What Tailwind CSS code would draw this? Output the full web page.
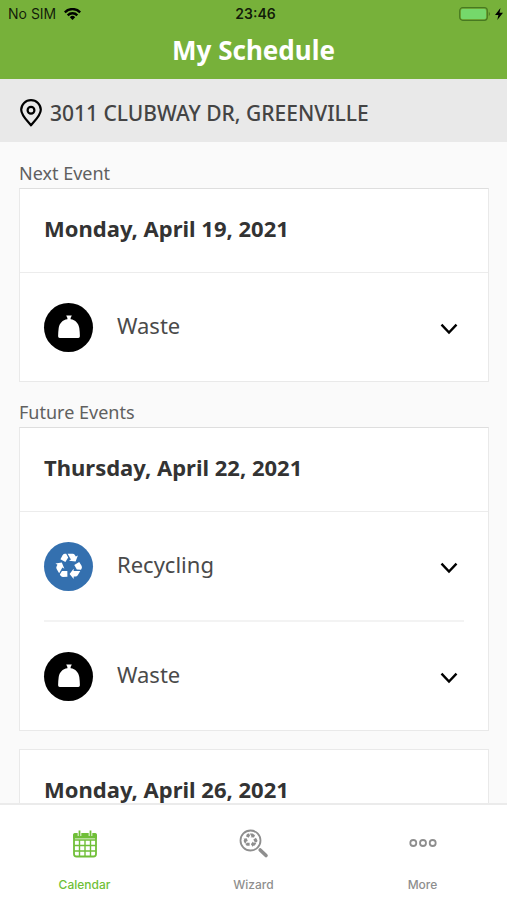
<!DOCTYPE html>
<html lang="en">
<head>
<meta charset="utf-8">
<meta name="viewport" content="width=device-width, initial-scale=1">
<title>My Schedule</title>
<script src="https://cdn.jsdelivr.net/npm/@tailwindcss/browser@4"></script>
</head>
<body class="flex h-screen flex-col overflow-hidden bg-[#fafafa] font-['Noto_Sans',sans-serif] text-[#333]">
<svg class="hidden" aria-hidden="true">
  <symbol id="recycle" viewBox="-14 -14 28 28">
    <g id="arm">
      <path d="M-8.600 -6.800L-6.400 -10.800Q-5.600 -12.200 -4 -12.200H-2.800L-.8 -8.600L-3.600 -4Z"/>
      <path d="M-1.400 -12.200H3.600Q5.200 -12.200 6 -10.800L6.800 -9.400L8.900 -10.500L6.600 -4.500L0 -5.300L1.900 -6.500Z"/>
    </g>
    <use href="#arm" transform="rotate(120)"/>
    <use href="#arm" transform="rotate(240)"/>
  </symbol>
  <symbol id="bag" viewBox="0 0 24 24">
    <path d="M9.200 .5H14.800L13.600 3V4.200C18.500 4.700 21.600 8.500 22.300 13Q22.900 17.500 22.900 21.300Q22.900 23 21.300 23H2.700Q1.100 23 1.100 21.300Q1.100 17.500 1.700 13C2.400 8.500 5.500 4.700 10.400 4.200V3Z"/>
  </symbol>
  <symbol id="chevron" viewBox="0 0 18 12">
    <path d="M1.500 1.700L9 9.500L16.500 1.700" fill="none" stroke="currentColor" stroke-width="2.400"/>
  </symbol>
</svg>

<header class="shrink-0 bg-[#77b13a] pb-[11px]">
  <div class="grid h-7 grid-cols-3 items-center pr-1 pl-2 font-['Inter',sans-serif] text-sm text-black/85">
    <div class="flex items-center gap-2">
      <span>No SIM</span>
      <svg class="h-3 w-[17px]" viewBox="0 0 17 12" fill="none" stroke="#000" stroke-width="2.400" aria-label="Wi-Fi"><path d="M.8 4.300A10.800 10.800 0 0 1 16.200 4.300M3.700 7.300A6.800 6.800 0 0 1 13.300 7.300"/><path d="M8.500 12L5.800 9.200A3.800 3.800 0 0 1 11.200 9.200Z" fill="#000" stroke="none"/></svg>
    </div>
    <span class="text-center font-semibold">23:46</span>
    <div class="flex items-center justify-end gap-1">
      <svg class="h-[14px] w-8" viewBox="0 0 32 14" aria-label="Battery charging"><rect x=".7" y=".7" width="27.600" height="12.600" rx="3" fill="none" stroke="#477921" stroke-width="1.200"/><rect x="2" y="2" width="25" height="10" rx="1.500" fill="#75d86b"/><path d="M29.800 4.800Q32 7 29.800 9.200Z" fill="#477921"/></svg>
      <svg class="h-3 w-2" viewBox="0 0 8 12" aria-hidden="true"><path d="M5.500 0L0 7H3.400L2.300 12L8 4.800H4.500Z"/></svg>
    </div>
  </div>
  <h1 class="pt-[5px] text-center text-[26px] leading-[35px] font-bold text-white">My Schedule</h1>
</header>

<div class="flex h-[63px] shrink-0 items-center gap-2 bg-[#e9e9e9] px-5 pt-1">
  <svg class="h-7 w-[22px]" viewBox="0 0 22 28" fill="none" stroke="#000" stroke-width="2.200" aria-hidden="true"><path d="M11 26.300C8 22.600 1.200 16.400 1.200 10.700A9.800 9.600 0 0 1 20.800 10.700C20.800 16.400 14 22.600 11 26.300Z" stroke-linejoin="round"/><circle cx="11" cy="11.300" r="3.400"/></svg>
  <span class="text-[21px] leading-7 font-medium text-[#444]">3011 CLUBWAY DR, GREENVILLE</span>
</div>

<main class="min-h-0 flex-1 overflow-y-auto pr-[18px] pl-[19px] [scrollbar-width:none]">
  <h2 class="pt-[19px] pb-[3px] text-lg leading-6 text-[#606060]">Next Event</h2>
  <section class="border border-[#e9e9e9] border-t-[#dedede] bg-white">
    <h3 class="border-b border-[#ececec] px-6 pt-6 pb-[29px] text-[22px] leading-[30px] font-bold">Monday, April 19, 2021</h3>
    <div class="mx-6 flex h-[108px] items-center">
      <span class="flex size-[49px] items-center justify-center rounded-full bg-black"><svg class="size-6 fill-white" aria-hidden="true"><use href="#bag"/></svg></span>
      <span class="flex-1 pb-1 pl-6 text-[22px] text-[#4a4a4a]">Waste</span>
      <button type="button" class="px-[6px] pt-[3px] text-black" aria-label="Show Waste details"><svg class="h-3 w-[18px]"><use href="#chevron"/></svg></button>
    </div>
  </section>

  <h2 class="pt-[18px] pb-[3px] text-lg leading-6 text-[#606060]">Future Events</h2>
  <section class="border border-[#e9e9e9] border-t-[#dedede] bg-white">
    <h3 class="border-b border-[#ececec] px-6 pt-6 pb-[29px] text-[22px] leading-[30px] font-bold">Thursday, April 22, 2021</h3>
    <div class="mx-6 flex h-[108px] items-center">
      <span class="flex size-[49px] items-center justify-center rounded-full bg-[#3470af]"><svg class="size-7 fill-white" aria-hidden="true"><use href="#recycle"/></svg></span>
      <span class="flex-1 pb-1 pl-6 text-[22px] text-[#4a4a4a]">Recycling</span>
      <button type="button" class="px-[6px] pt-[3px] text-black" aria-label="Show Recycling details"><svg class="h-3 w-[18px]"><use href="#chevron"/></svg></button>
    </div>
    <div class="mx-6 flex h-[110px] items-center border-t-2 border-[#f3f3f3]">
      <span class="flex size-[49px] items-center justify-center rounded-full bg-black"><svg class="size-6 fill-white" aria-hidden="true"><use href="#bag"/></svg></span>
      <span class="flex-1 pb-1 pl-6 text-[22px] text-[#4a4a4a]">Waste</span>
      <button type="button" class="px-[6px] pt-[3px] text-black" aria-label="Show Waste details"><svg class="h-3 w-[18px]"><use href="#chevron"/></svg></button>
    </div>
  </section>

  <section class="mt-[18px] border border-[#e9e9e9] bg-white">
    <h3 class="px-6 pt-6 pb-[29px] text-[22px] leading-[30px] font-bold">Monday, April 26, 2021</h3>
  </section>
</main>

<nav class="grid h-[97px] shrink-0 grid-cols-3 border-t-2 border-[#ebebeb] bg-white font-['Inter',sans-serif] text-[12px] leading-4 font-medium text-[#8e8e8e]">
  <a href="#calendar" class="flex flex-col items-center gap-[18px] pt-6 text-[#70bf38]" aria-current="page">
    <svg class="h-[30px] w-7" viewBox="0 0 28 30" aria-hidden="true"><rect x="3" y="5" width="22" height="22.500" rx="2.500" fill="none" stroke="currentColor" stroke-width="1.800"/><path d="M2 9.500V6Q2 4 4 4H24Q26 4 26 6V9.500Z" fill="currentColor"/><path d="M3 11H25M3 16.500H25M3 22H25M8.500 11V27M14 11V27M19.500 11V27" stroke="currentColor" stroke-width="1.400"/><path d="M8.500 1.500V7M19.500 1.500V7" stroke="#fff" stroke-width="3.600"/><path d="M8.500 1.500V7M19.500 1.500V7" stroke="currentColor" stroke-width="1.800"/></svg>
    Calendar
  </a>
  <a href="#wizard" class="flex flex-col items-center gap-[18px] pt-6">
    <svg class="size-[30px]" viewBox="0 0 30 30" aria-hidden="true"><circle cx="11.500" cy="11.500" r="10" fill="none" stroke="currentColor" stroke-width="1.800"/><use href="#recycle" x="4" y="3.500" width="15" height="15" fill="currentColor"/><path d="M21.200 21L27 26.500" stroke="currentColor" stroke-width="3.600" stroke-linecap="round"/></svg>
    Wizard
  </a>
  <a href="#more" class="flex flex-col items-center gap-[18px] pt-6">
    <svg class="h-[30px] w-7" viewBox="0 0 28 30" fill="none" stroke="currentColor" stroke-width="1.800" aria-hidden="true"><circle cx="4.300" cy="14" r="3"/><circle cx="14" cy="14" r="3"/><circle cx="23.700" cy="14" r="3"/></svg>
    More
  </a>
</nav>
</body>
</html>
